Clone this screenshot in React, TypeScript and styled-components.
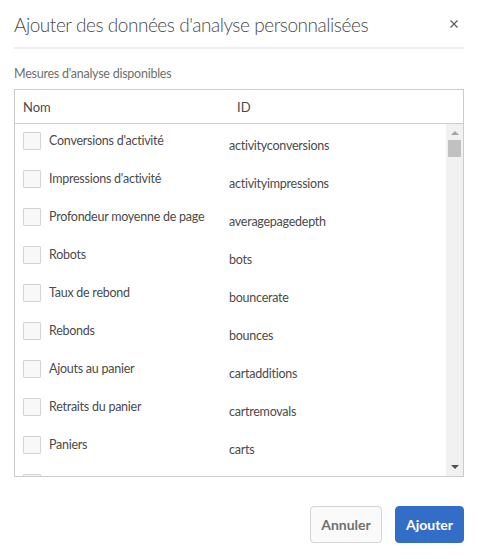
import styled, { createGlobalStyle } from 'styled-components';

const GlobalStyle = createGlobalStyle`
  html, body {
    margin: 0;
    padding: 0;
    background: #ffffff;
  }
  body {
    font-family: Lato, 'Open Sans', sans-serif;
    color: #4b4b4b;
  }
`;

const metrics = [
  { name: "Conversions d'activité", id: 'activityconversions' },
  { name: "Impressions d'activité", id: 'activityimpressions' },
  { name: 'Profondeur moyenne de page', id: 'averagepagedepth' },
  { name: 'Robots', id: 'bots' },
  { name: 'Taux de rebond', id: 'bouncerate' },
  { name: 'Rebonds', id: 'bounces' },
  { name: 'Ajouts au panier', id: 'cartadditions' },
  { name: 'Retraits du panier', id: 'cartremovals' },
  { name: 'Paniers', id: 'carts' },
  { name: 'Commandes', id: 'orders' },
];

const App = () => {
  return (
    <>
      <GlobalStyle />
      <Dialog>
        <Header>
          <Title>Ajouter des données d'analyse personnalisées</Title>
          <CloseButton aria-label='Fermer'>
            <svg width='8' height='8' viewBox='0 0 8 8'>
              <path d='M0.5 0.5L7.5 7.5M7.5 0.5L0.5 7.5' stroke='#5a5a5a' strokeWidth='1.2' />
            </svg>
          </CloseButton>
        </Header>
        <SectionLabel>Mesures d'analyse disponibles</SectionLabel>
        <Table>
          <TableHead>
            <HeadCell $width={214}>Nom</HeadCell>
            <HeadCell>ID</HeadCell>
          </TableHead>
          <TableBody>
            <Rows>
              {metrics.map((m) => (
                <Row key={m.id}>
                  <NameCell>
                    <Checkbox />
                    <Name>{m.name}</Name>
                  </NameCell>
                  <IdCell>{m.id}</IdCell>
                </Row>
              ))}
            </Rows>
            <Scrollbar>
              <Arrow $dir='up' />
              <Thumb />
              <Track />
              <Arrow $dir='down' />
            </Scrollbar>
          </TableBody>
        </Table>
        <Footer>
          <Button $width={72}>Annuler</Button>
          <Button $width={69} $primary>
            Ajouter
          </Button>
        </Footer>
      </Dialog>
    </>
  );
};

export default App;

const Dialog = styled.div`
  width: 478px;
  height: 559px;
  box-sizing: border-box;
  padding: 0 14px;
  display: flex;
  flex-direction: column;
`;

const Header = styled.div`
  height: 47px;
  border-bottom: 2px solid #eeeeee;
  display: flex;
  align-items: center;
  justify-content: space-between;
`;

const Title = styled.h1`
  margin: 0;
  font-family: Lato, 'Open Sans', sans-serif;
  font-weight: 300;
  font-size: 19px;
  letter-spacing: -0.45px;
  color: #4b4b4b;
  padding-top: 1px;
`;

const CloseButton = styled.button`
  border: none;
  background: none;
  padding: 0;
  margin-right: 6px;
  width: 8px;
  height: 8px;
  display: flex;
`;

const SectionLabel = styled.div`
  margin-top: 17px;
  height: 23px;
  font-size: 12.5px;
  letter-spacing: -0.25px;
  line-height: 15px;
  color: #707070;
`;

const Table = styled.div`
  border: 1px solid #cccccc;
  display: flex;
  flex-direction: column;
`;

const TableHead = styled.div`
  height: 33px;
  border-bottom: 1px solid #cccccc;
  display: flex;
  align-items: center;
  padding-left: 8px;
  font-size: 13px;
`;

const HeadCell = styled.div<{ $width?: number }>`
  width: ${(p) => (p.$width ? `${p.$width}px` : 'auto')};
  color: #4b4b4b;
`;

const TableBody = styled.div`
  height: 352px;
  display: flex;
  overflow: hidden;
`;

const Rows = styled.div`
  flex: 1;
  overflow: hidden;
  padding-top: 8px;
`;

const Row = styled.div`
  height: 38px;
  display: flex;
  align-items: flex-start;
  padding-left: 8px;
  font-size: 12.5px;
  letter-spacing: -0.25px;
`;

const NameCell = styled.div`
  width: 206px;
  display: flex;
  align-items: center;
  gap: 8px;
`;

const Checkbox = styled.span`
  width: 16px;
  height: 16px;
  border: 1px solid #d3d3d3;
  border-radius: 1px;
  background: #f8f8f8;
  flex-shrink: 0;
`;

const Name = styled.span`
  line-height: 18px;
  color: #4b4b4b;
  white-space: nowrap;
  margin-top: -1px;
`;

const IdCell = styled.div`
  line-height: 18px;
  margin-top: 5px;
  color: #4b4b4b;
`;

const Scrollbar = styled.div`
  width: 17px;
  background: #f1f1f1;
  display: flex;
  flex-direction: column;
  align-items: center;
`;

const Arrow = styled.div<{ $dir: 'up' | 'down' }>`
  width: 0;
  height: 0;
  margin: ${(p) => (p.$dir === 'up' ? '7px 0 5px' : '4px 0 7px')};
  border-left: 4px solid transparent;
  border-right: 4px solid transparent;
  ${(p) =>
    p.$dir === 'up'
      ? 'border-bottom: 4px solid #a3a3a3;'
      : 'border-top: 4px solid #505050;'}
`;

const Thumb = styled.div`
  width: 13px;
  height: 17px;
  background: #c1c1c1;
`;

const Track = styled.div`
  flex: 1;
`;

const Footer = styled.div`
  margin-top: 29px;
  display: flex;
  justify-content: flex-end;
  gap: 13px;
`;

const Button = styled.button<{ $primary?: boolean; $width: number }>`
  width: ${(p) => p.$width}px;
  height: 37px;
  padding: 0;
  border-radius: 4px;
  font-family: Lato, 'Open Sans', sans-serif;
  font-weight: 700;
  font-size: 14px;
  border: 1px solid ${(p) => (p.$primary ? '#326ec8' : '#d4d4d4')};
  background: ${(p) => (p.$primary ? '#326ec8' : '#fafafa')};
  color: ${(p) => (p.$primary ? '#ffffff' : '#707070')};
`;
